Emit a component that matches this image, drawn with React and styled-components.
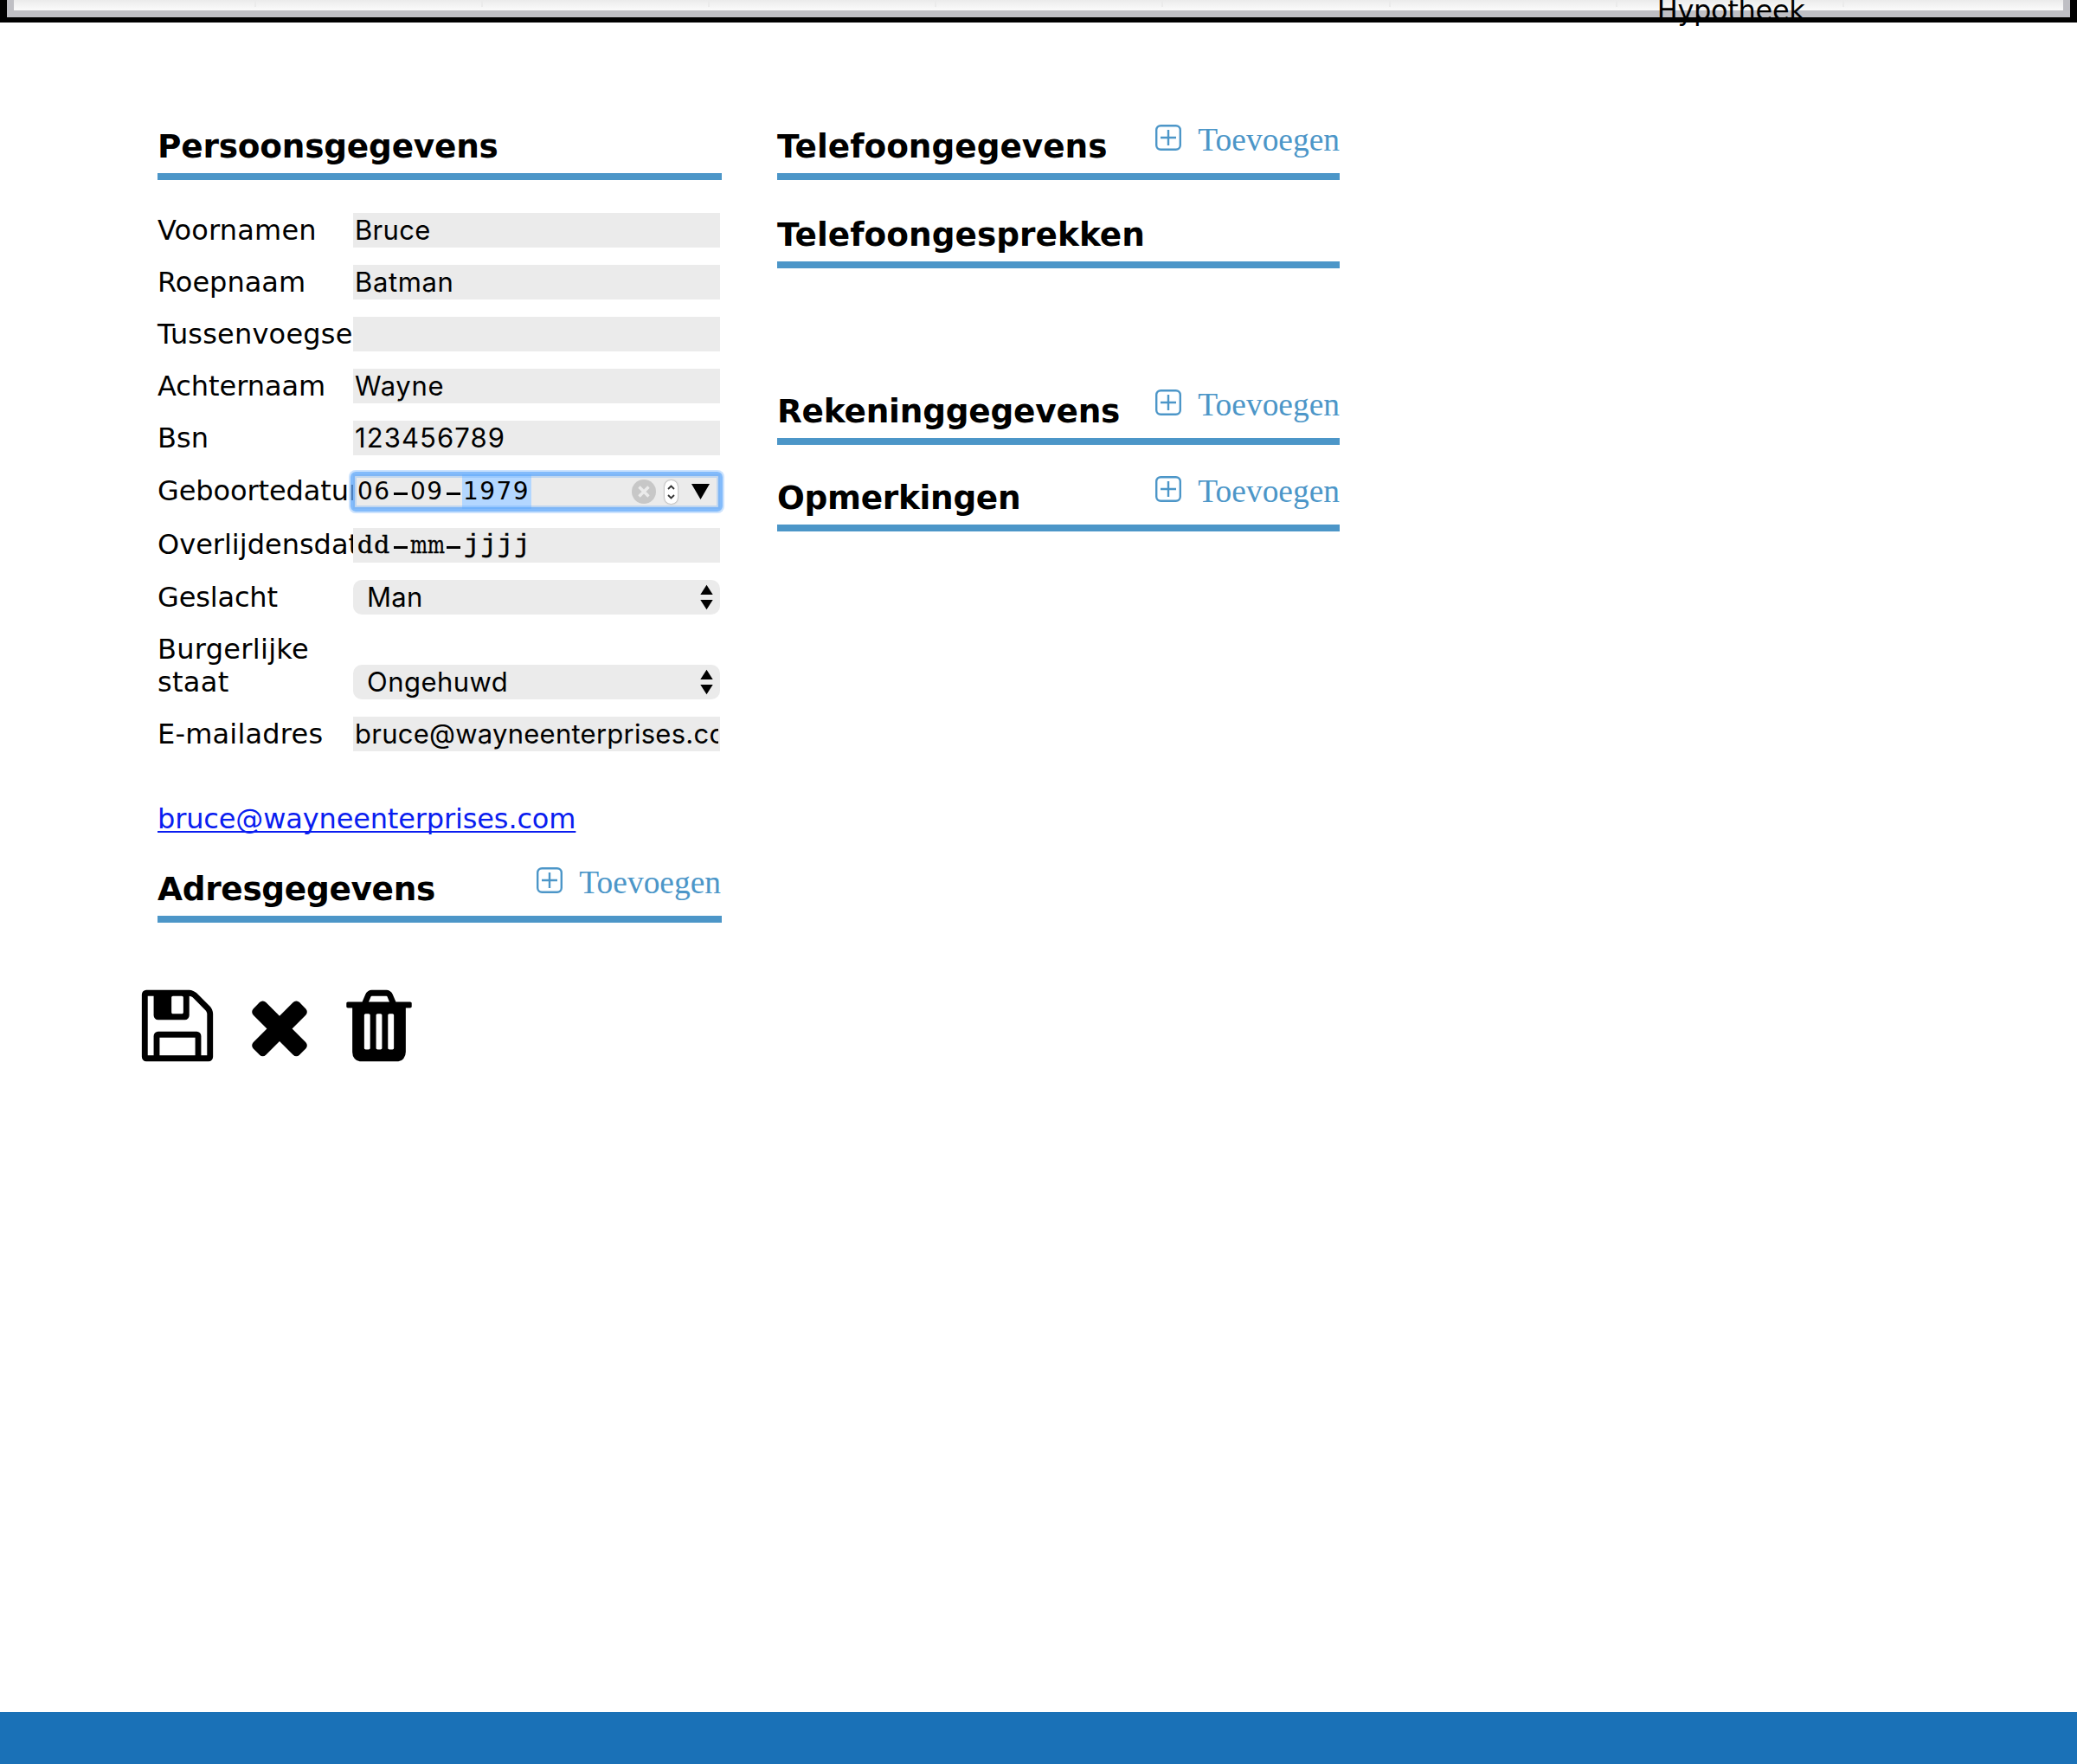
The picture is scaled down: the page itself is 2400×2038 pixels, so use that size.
import React from "react";
import styled, { createGlobalStyle, css } from "styled-components";

const blue = "#4c96c8";
const fieldGrey = "#ebebeb";
const sans = `"DejaVu Sans", sans-serif`;

const GlobalStyle = createGlobalStyle`
  *, *::before, *::after { box-sizing: border-box; }
  html, body { margin: 0; padding: 0; background: #fff; }
  body { font-family: ${sans}; font-size: 32px; color: #000; overflow: hidden; }
`;

const Page = styled.div`
  display: flex;
  flex-direction: column;
  width: 2400px;
  height: 2038px;
  overflow: hidden;
`;

const Banner = styled.header`
  flex: none;
  height: 26px;
  border: solid #000;
  border-width: 0 8px 6px;
`;

const BannerFrame = styled.div`
  height: 20px;
  border: solid #bfbfc4;
  border-width: 0 8px 8px;
`;

const Menu = styled.nav`
  display: flex;
  height: 12px;
  padding-left: 18px;
  background: linear-gradient(#ebebeb, #fbfbfb);
`;

const MenuItem = styled.div`
  flex: none;
  width: 262.1px;
  height: 8px;
  border-right: 2px solid #ebebeb;
`;

const MenuText = styled.span`
  display: block;
  width: max-content;
  margin: -7px 0 0 46px;
  line-height: 38px;
  letter-spacing: -0.3px;
  position: relative;
`;

const Main = styled.main`
  flex: 1;
  display: flex;
  flex-direction: column;
  padding: 114px 0 0 182px;
`;

const Columns = styled.div`
  display: flex;
  gap: 64px;
`;

const Column = styled.section`
  display: flex;
  flex-direction: column;
  width: ${(p) => p.$width}px;
`;

const SectionBar = styled.div`
  display: flex;
  justify-content: space-between;
  height: 68px;
  margin-top: ${(p) => p.$gap || 0}px;
  border-bottom: 8px solid ${blue};
`;

const SectionTitle = styled.h3`
  margin: 7px 0 0;
  font-size: 37.44px;
  line-height: 44px;
  font-weight: bold;
  letter-spacing: ${(p) => p.$tracking ?? -0.2}px;
  white-space: nowrap;
`;

const AddLink = styled.a`
  display: flex;
  gap: 19px;
  margin-right: ${(p) => p.$inset || 0}px;
  color: ${blue};
  font: 37.44px/42px "Liberation Serif", serif;
  svg { margin-top: 4px; }
`;

const AddText = styled.span`
  margin-top: 1px;
`;

const Rows = styled.div`
  display: flex;
  flex-direction: column;
  gap: 20px;
  padding-top: 38px;
`;

const Row = styled.div`
  display: flex;
  align-items: flex-end;
  width: 650px;
  height: ${(p) => (p.$tall ? 78 : 40)}px;
  margin: ${(p) => p.$margin || "0"};
`;

const Label = styled.label`
  align-self: flex-start;
  flex: none;
  width: 226px;
  line-height: 38px;
  padding-top: ${(p) => p.$top ?? 1}px;
  letter-spacing: ${(p) => p.$tracking ?? 0}px;
`;

const Field = styled.div`
  position: relative;
  flex: none;
  display: flex;
  width: 424px;
  height: 40px;
  background: ${fieldGrey};
  font: 31px/40px Inter, sans-serif;
  letter-spacing: ${(p) => p.$tracking ?? 0}px;
  ${(p) =>
    p.$focus &&
    css`
      &::after {
        content: "";
        position: absolute;
        inset: -3px;
        border: 5px solid rgba(92, 166, 250, 0.76);
        border-radius: 6px;
        box-shadow: 0 0 0 2px rgba(92, 166, 250, 0.32), inset 0 0 0 2px rgba(92, 166, 250, 0.3);
      }
    `}
`;

const FieldText = styled.span`
  display: block;
  width: 420px;
  margin-left: 2px;
  overflow: hidden;
  white-space: nowrap;
`;

const Select = styled(Field)`
  justify-content: space-between;
  align-items: center;
  padding: 0 8px 0 16px;
  border-radius: 10px;
`;

const DateParts = styled.div`
  display: flex;
  padding-left: 4px;
  font: 28px/40px ${sans};
`;

const Part = styled.span`
  width: ${(p) => p.$width}px;
  height: 40px;
  padding-left: 1px;
  letter-spacing: 1.4px;
  background: ${(p) => (p.$selected ? "#b3d7ff" : "transparent")};
  font-family: ${(p) => p.$family || "inherit"};
  font-size: ${(p) => p.$size || 28}px;
  -webkit-text-stroke: ${(p) => (p.$family ? 0.45 : 0)}px #000;
`;

const Narrow = styled.span`
  display: inline-block;
  letter-spacing: 0;
  transform: scaleX(0.75);
  transform-origin: left;
`;

const Dash = styled.span`
  align-self: center;
  width: 16px;
  height: 3px;
  margin: 4px 2px 0 3px;
  background: #000;
`;

const Spacer = styled.span`
  flex: none;
  width: ${(p) => p.$width}px;
`;

const DateControls = styled.div`
  flex: 1;
  display: flex;
  justify-content: flex-end;
  align-items: center;
  padding-right: 12px;
`;

const Stepper = styled.span`
  display: flex;
  align-items: center;
  justify-content: center;
  width: 15px;
  height: 27px;
  margin: 0 16px 0 10px;
  border-radius: 7px;
  background: #fff;
  box-shadow: 0 0 2px rgba(0, 0, 0, 0.55);
`;

const MailLink = styled.a`
  width: max-content;
  margin-top: 59px;
  line-height: 38px;
  color: #0a1df0;
  letter-spacing: -0.14px;
  text-decoration: underline;
  text-decoration-skip-ink: none;
  text-decoration-thickness: 2px;
  text-underline-offset: 3px;
`;

const Actions = styled.div`
  display: flex;
  margin: 71px 0 0 -25px;
`;

const ActionIcon = styled.svg`
  display: block;
  width: 96px;
  height: 96px;
  margin-right: ${(p) => p.$after || 0}px;
`;

const Footer = styled.footer`
  flex: none;
  height: 60px;
  background: #1a71b7;
`;

const PlusIcon = () => (
  <svg width="30" height="30" viewBox="0 0 30 30" fill="none" stroke={blue}>
    <rect x="1.2" y="1.2" width="27.6" height="27.6" rx="5" strokeWidth="2.4" />
    <path d="M15 6v18M6 15h18" strokeWidth="2.4" />
  </svg>
);

const UpDown = () => (
  <svg width="15" height="30" viewBox="0 0 15 30">
    <path d="M7.5 .8L14.7 12H.3zM7.5 29.2L14.7 18H.3z" />
  </svg>
);

const Section = ({ title, gap, add, inset, tracking }) => (
  <SectionBar $gap={gap}>
    <SectionTitle $tracking={tracking}>{title}</SectionTitle>
    {add && (
      <AddLink $inset={inset}>
        <PlusIcon />
        <AddText>Toevoegen</AddText>
      </AddLink>
    )}
  </SectionBar>
);

const TextRow = ({ label, value, tracking, labelTracking }) => (
  <Row>
    <Label $tracking={labelTracking}>{label}</Label>
    <Field $tracking={tracking}>
      <FieldText>{value}</FieldText>
    </Field>
  </Row>
);

export default function App() {
  return (
    <>
      <GlobalStyle />
      <Page>
        <Banner>
          <BannerFrame>
            <Menu>
              {[0, 1, 2, 3, 4, 5, 6].map((n) => (
                <MenuItem key={n} />
              ))}
              <MenuItem>
                <MenuText>Hypotheek</MenuText>
              </MenuItem>
            </Menu>
          </BannerFrame>
        </Banner>

        <Main>
          <Columns>
            <Column $width={652}>
              <Section title="Persoonsgegevens" />
              <Rows>
                <TextRow label="Voornamen" value="Bruce" labelTracking={0.17} tracking={0.3} />
                <TextRow label="Roepnaam" value="Batman" tracking={0.6} />
                <TextRow label="Tussenvoegsel" value="" labelTracking={0.2} />
                <TextRow label="Achternaam" value="Wayne" labelTracking={-0.05} tracking={0.7} />
                <TextRow label="Bsn" value="123456789" tracking={1.1} />
                <Row $margin="2px 0">
                  <Label $top={0} $tracking={-0.1}>Geboortedatum</Label>
                  <Field $focus>
                    <DateParts>
                      <Part $width={40}>06</Part>
                      <Dash />
                      <Part $width={40}>09</Part>
                      <Dash />
                      <Part $width={80} $selected>1979</Part>
                    </DateParts>
                    <DateControls>
                      <svg width="28" height="28" viewBox="0 0 28 28">
                        <circle cx="14" cy="14" r="14" fill="#c7c7c7" />
                        <path d="M8.5 8.5l11 11M19.5 8.5l-11 11" stroke="#ebebeb" strokeWidth="3.4" />
                      </svg>
                      <Stepper>
                        <svg width="9" height="17" viewBox="0 0 9 17" fill="none" stroke="#333" strokeWidth="1.8">
                          <path d="M1 5l3.5-3.5L8 5M1 12l3.5 3.5L8 12" />
                        </svg>
                      </Stepper>
                      <svg width="21" height="18" viewBox="0 0 21 18">
                        <path d="M0 0h21L10.5 18z" />
                      </svg>
                    </DateControls>
                  </Field>
                </Row>
                <Row>
                  <Label $top={0}>Overlijdensdatum</Label>
                  <Field>
                    <DateParts>
                      <Part $width={40} $family={`"DejaVu Serif", serif`}>dd</Part>
                      <Dash />
                      <Part $width={40} $family={`"DejaVu Serif", serif`}>
                        <Narrow>mm</Narrow>
                      </Part>
                      <Dash />
                      <Spacer $width={1} />
                      <Part $width={80} $family={`"Liberation Mono", monospace`} $size={30}>jjjj</Part>
                    </DateParts>
                  </Field>
                </Row>
                <Row>
                  <Label $tracking={-0.15}>Geslacht</Label>
                  <Select $tracking={0.3}>
                    Man
                    <UpDown />
                  </Select>
                </Row>
                <Row $tall>
                  <Label $tracking={0.3}>Burgerlijke staat</Label>
                  <Select $tracking={0.45}>
                    Ongehuwd
                    <UpDown />
                  </Select>
                </Row>
                <TextRow label="E-mailadres" value="bruce@wayneenterprises.com" labelTracking={0.2} tracking={0.25} />
              </Rows>
              <MailLink>bruce@wayneenterprises.com</MailLink>
              <Section title="Adresgegevens" gap={33} add inset={1} tracking={-0.3} />
            </Column>

            <Column $width={650}>
              <Section title="Telefoongegevens" add tracking={0} />
              <Section title="Telefoongesprekken" gap={34} tracking={0.03} />
              <Section title="Rekeninggegevens" gap={136} add />
              <Section title="Opmerkingen" gap={32} add tracking={-0.3} />
            </Column>
          </Columns>

          <Actions>
            <ActionIcon $after={22} viewBox="0 0 1792 1792">
              <path d="M512 1536h768v-384h-768v384zm896 0h128v-896q0-14-10-38.5t-20-34.5l-281-281q-10-10-34-20t-39-10v416q0 40-28 68t-68 28h-576q-40 0-68-28t-28-68v-416h-128v1280h128v-416q0-40 28-68t68-28h832q40 0 68 28t28 68v416zm-384-928v-320q0-13-9.5-22.5t-22.5-9.5h-192q-13 0-22.5 9.5t-9.5 22.5v320q0 13 9.5 22.5t22.5 9.5h192q13 0 22.5-9.5t9.5-22.5zm640 32v928q0 40-28 68t-68 28h-1344q-40 0-68-28t-28-68v-1344q0-40 28-68t68-28h928q40 0 88 20t76 48l280 280q28 28 48 76t20 88z" />
            </ActionIcon>
            <ActionIcon $after={19} viewBox="0 0 1792 1792">
              <path d="M1490 1322q0 40-28 68l-136 136q-28 28-68 28t-68-28l-294-294-294 294q-28 28-68 28t-68-28l-136-136q-28-28-28-68t28-68l294-294-294-294q-28-28-28-68t28-68l136-136q28-28 68-28t68 28l294 294 294-294q28-28 68-28t68 28l136 136q28 28 28 68t-28 68l-294 294 294 294q28 28 28 68z" />
            </ActionIcon>
            <ActionIcon viewBox="0 0 1792 1792">
              <path
                fillRule="evenodd"
                d="M704 1376v-704q0-14-9-23t-23-9h-64q-14 0-23 9t-9 23v704q0 14 9 23t23 9h64q14 0 23-9t9-23zm256 0v-704q0-14-9-23t-23-9h-64q-14 0-23 9t-9 23v704q0 14 9 23t23 9h64q14 0 23-9t9-23zm256 0v-704q0-14-9-23t-23-9h-64q-14 0-23 9t-9 23v704q0 14 9 23t23 9h64q14 0 23-9t9-23zm-544-992h448l-48-117q-7-9-17-11h-317q-10 2-17 11zm928 32v64q0 14-9 23t-23 9h-96v948q0 83-47 143.5t-113 60.5h-832q-66 0-113-58.5t-47-141.5v-952h-96q-14 0-23-9t-9-23v-64q0-14 9-23t23-9h309l70-167q15-37 54-63t79-26h320q40 0 79 26t54 63l70 167h309q14 0 23 9t9 23z"
              />
            </ActionIcon>
          </Actions>
        </Main>
        <Footer />
      </Page>
    </>
  );
}
